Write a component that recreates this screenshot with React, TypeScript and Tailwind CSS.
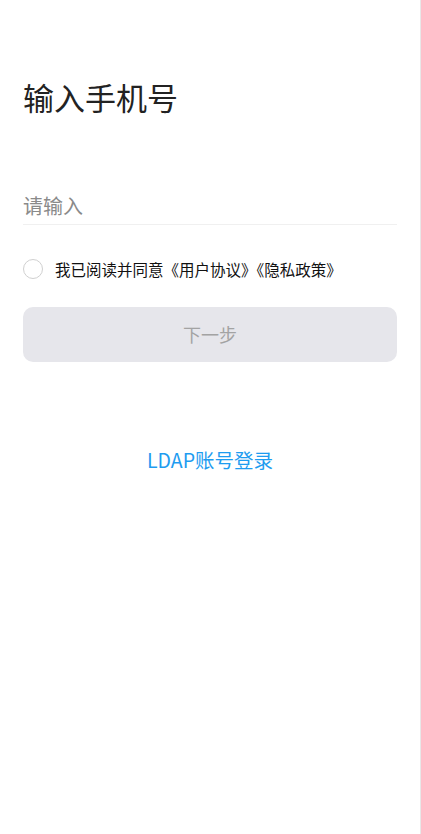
import React, { useState } from 'react';

const font = { fontFamily: '"Noto Sans CJK SC", "Noto Sans", sans-serif' };

export default function App() {
  const [phone, setPhone] = useState('');
  const [agreed, setAgreed] = useState(false);

  return (
    <div className="min-h-[834px] w-full bg-white flex" style={font}>
      <div className="flex-1 px-[23px] pt-[77px]">
        {/* Title */}
        <h1 className="text-[31px] leading-[40px] text-[#222222] font-normal">输入手机号</h1>

        {/* Phone input */}
        <div className="mt-[74px] border-b border-[#f0f0f0] pb-[3px]">
          <input
            value={phone}
            onChange={(e) => setPhone(e.target.value)}
            placeholder="请输入"
            className="w-full h-[30px] text-[20px] text-[#222] placeholder:text-[#8a8a8a] outline-none bg-transparent"
          />
        </div>

        {/* Agreement */}
        <div className="flex items-center mt-[34px]">
          <button
            onClick={() => setAgreed(!agreed)}
            className={`w-[20px] h-[20px] rounded-full border-[1.5px] ${agreed ? 'border-[#1a9bf0] bg-[#1a9bf0]' : 'border-[#d0d0d0]'}`}
          />
          <span className="ml-[12px] text-[15.5px] leading-[20px] text-[#111]">
            我已阅读并同意《用户协议》《隐私政策》
          </span>
        </div>

        {/* Next button */}
        <button className="mt-[28px] w-full h-[55px] rounded-[10px] bg-[#e6e6eb] text-[18px] text-[#a3a3a3]">
          下一步
        </button>

        {/* LDAP */}
        <div className="mt-[85px] flex justify-center">
          <span className="text-[19.5px] leading-[26px] text-[#1e9cf0]">LDAP账号登录</span>
        </div>
      </div>
      <div className="w-px bg-[#e8e8e8]" />
    </div>
  );
}
